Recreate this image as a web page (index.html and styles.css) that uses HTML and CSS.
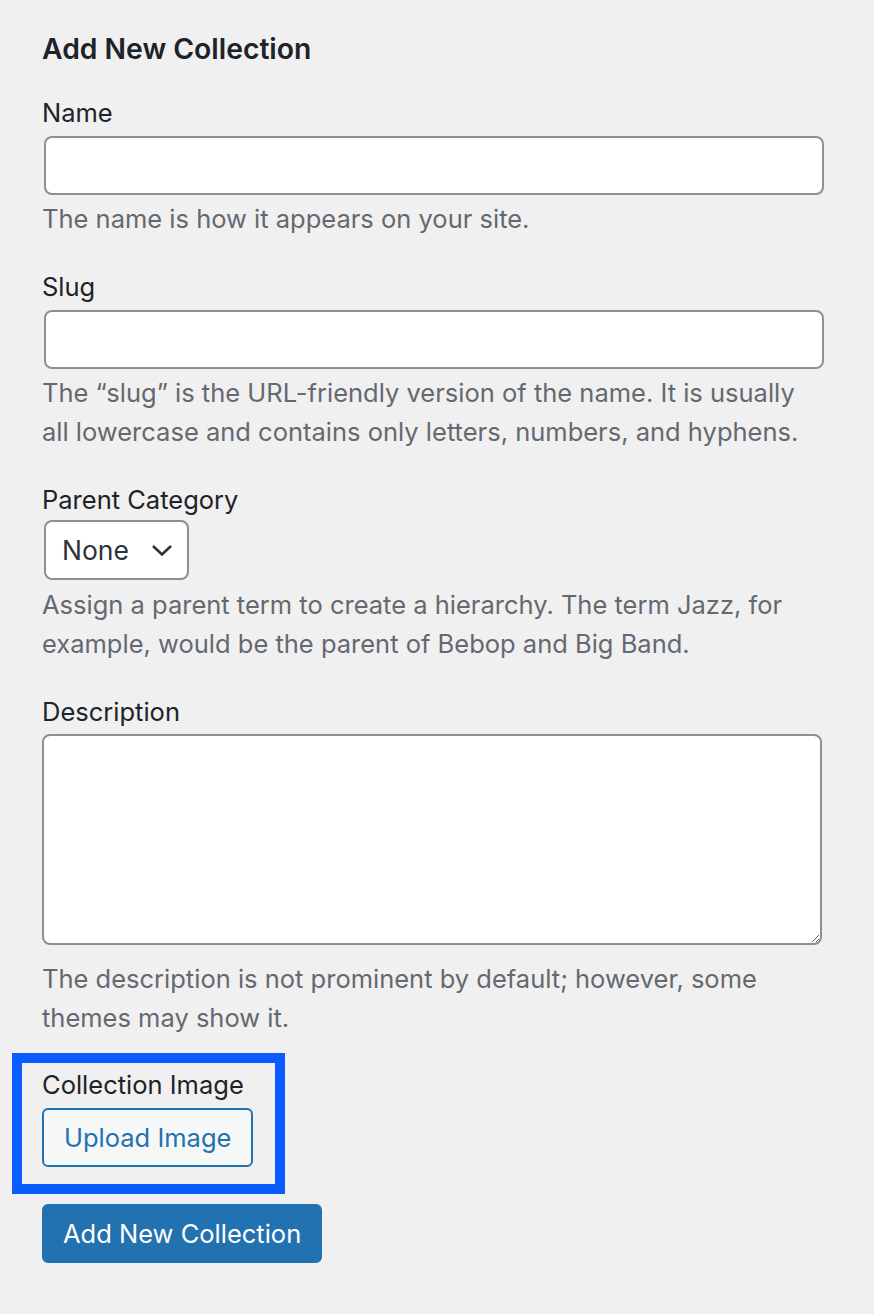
FILE: index.html
```html
<!DOCTYPE html>
<html lang="en">
<head>
    <meta charset="UTF-8">
    <meta name="viewport" content="width=device-width, initial-scale=1.0">
    <link rel="stylesheet" href="styles.css">
</head>

<body>
    <div class="form-wrap">
        <h2>Add New Collection</h2>

        <form>
            <div class="form-field">
                <label for="tag-name">Name</label>
                <input type="text" id="tag-name" class="text-input">
                <p class="help">The name is how it appears on your site.</p>
            </div>

            <div class="form-field">
                <label for="tag-slug">Slug</label>
                <input type="text" id="tag-slug" class="text-input">
                <p class="help">The “slug” is the URL-friendly version of the name. It is usually all lowercase and contains only letters, numbers, and hyphens.</p>
            </div>

            <div class="form-field">
                <label for="parent">Parent Category</label>
                <div class="select">
                    <span>None</span>
                    <svg width="22" height="14" viewBox="0 0 22 14">
                        <path d="M2 3 L11 11.5 L20 3" fill="none" stroke="#2c3338" stroke-width="2.6"/>
                    </svg>
                </div>
                <p class="help">Assign a parent term to create a hierarchy. The term Jazz, for example, would be the parent of Bebop and Big Band.</p>
            </div>

            <div class="form-field">
                <label for="tag-description">Description</label>
                <textarea id="tag-description" class="text-area"></textarea>
                <p class="help">The description is not prominent by default; however, some themes may show it.</p>
            </div>

            <div class="form-field highlight">
                <label>Collection Image</label>
                <button type="button" class="button-secondary">Upload Image</button>
            </div>

            <p class="submit">
                <button type="button" class="button-primary">Add New Collection</button>
            </p>
        </form>
    </div>
</body>

</html>
```

FILE: styles.css
```css
        body {
            font-family: Inter, "Noto Sans", sans-serif;
            background-color: #f0f0f1;
            color: #1d2327;
            margin: 0;
            padding: 0;
        }

        .form-wrap {
            padding: 29px 50px 40px 42px;
        }

        h2 {
            font-size: 28.3px;
            font-weight: 600;
            line-height: 40px;
            margin: 0 0 25px 0;
        }

        .form-field {
            margin-bottom: 30px;
        }

        .form-field label {
            display: block;
            font-size: 25.5px;
            line-height: 38px;
            margin-bottom: 4px;
        }

        .text-input {
            display: block;
            box-sizing: border-box;
            width: 780px;
            height: 59px;
            margin: 0 0 4px 2px;
            border: 2px solid #8c8f94;
            border-radius: 8px;
            background: white;
        }

        .select {
            box-sizing: border-box;
            width: 145px;
            height: 60px;
            margin: -3px 0 5px 2px;
            border: 2px solid #8c8f94;
            border-radius: 8px;
            background: white;
            display: flex;
            align-items: center;
            justify-content: space-between;
            padding: 0 14px 0 16px;
            font-size: 26.5px;
            color: #2c3338;
        }

        .text-area {
            display: block;
            box-sizing: border-box;
            width: 780px;
            height: 211px;
            margin: -1px 0 14px 0;
            border: 2px solid #8c8f94;
            border-radius: 8px;
            background: white;
        }

        .help {
            font-size: 25.5px;
            line-height: 39px;
            color: #646970;
            margin: 0;
        }

        .highlight {
            width: fit-content;
            margin: -14px 0 10px -30px;
            padding: 3px 22px 17px 20px;
            border: 10px solid #0a5cff;
        }

        .button-secondary {
            font-family: inherit;
            font-size: 25.5px;
            height: 59px;
            padding: 0 20px;
            border: 2px solid #2271b1;
            border-radius: 6px;
            background-color: #f6f7f7;
            color: #2271b1;
        }

        .submit {
            margin: 0;
        }

        .button-primary {
            font-family: inherit;
            font-size: 25.5px;
            height: 59px;
            padding: 0 19px;
            border: 2px solid #2271b1;
            border-radius: 6px;
            background-color: #2271b1;
            color: white;
        }
```
